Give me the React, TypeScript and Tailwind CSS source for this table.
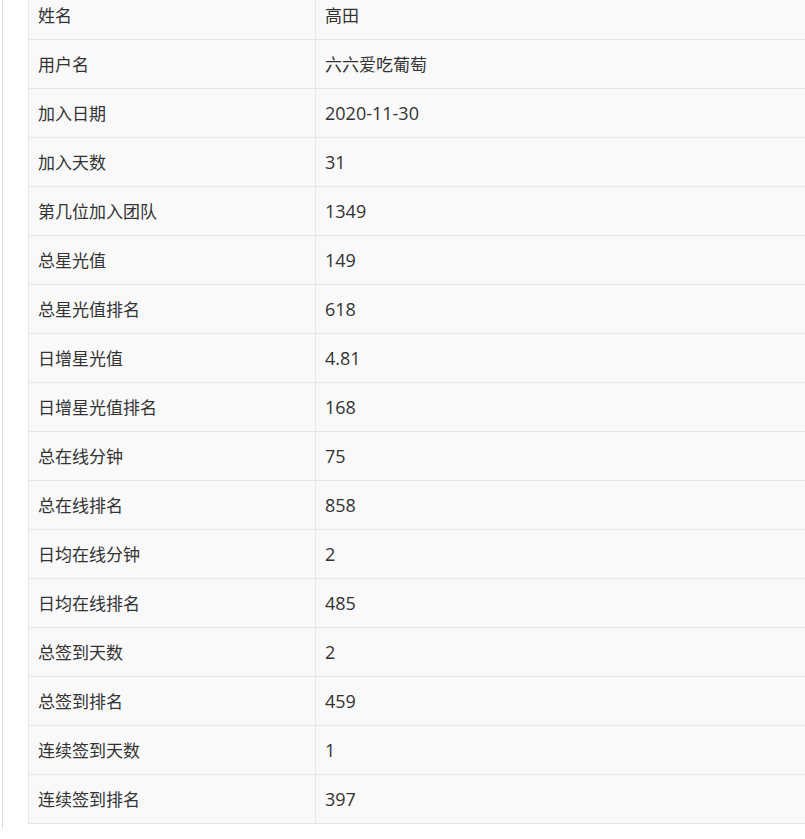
const rows: [string, string][] = [
  ['姓名', '高田'],
  ['用户名', '六六爱吃葡萄'],
  ['加入日期', '2020-11-30'],
  ['加入天数', '31'],
  ['第几位加入团队', '1349'],
  ['总星光值', '149'],
  ['总星光值排名', '618'],
  ['日增星光值', '4.81'],
  ['日增星光值排名', '168'],
  ['总在线分钟', '75'],
  ['总在线排名', '858'],
  ['日均在线分钟', '2'],
  ['日均在线排名', '485'],
  ['总签到天数', '2'],
  ['总签到排名', '459'],
  ['连续签到天数', '1'],
  ['连续签到排名', '397'],
]

// numbers render a bit larger than the CJK text in the original
const isNumeric = (v: string) => /^[0-9.\-]+$/.test(v)

const App = () => {
  return (
    <div className="w-[805px] h-[839px] overflow-hidden bg-white pl-[2px] font-['Segoe_UI','Open_Sans','Noto_Sans_CJK_SC',sans-serif] text-[17px] text-[#333333]">
      <div className="h-full border-l border-[#dcdce6] pl-[25px]">
        <div className="-mt-[10px] w-[900px] border border-[#e6e6e6] bg-[#f9f9f9]">
          {rows.map(([label, value], i) => (
            <div
              key={label}
              className={`flex ${i < rows.length - 1 ? 'h-[49px] border-b border-[#e6e6e6]' : 'h-[48px]'}`}
            >
              <div className="flex w-[287px] items-center border-r border-[#e6e6e6] pl-[9px] pt-px">
                {label}
              </div>
              <div
                className={`flex flex-1 items-center pl-[9px] pt-px ${isNumeric(value) ? 'text-[18px]' : ''}`}
              >
                {value}
              </div>
            </div>
          ))}
        </div>
      </div>
    </div>
  )
}

export default App
